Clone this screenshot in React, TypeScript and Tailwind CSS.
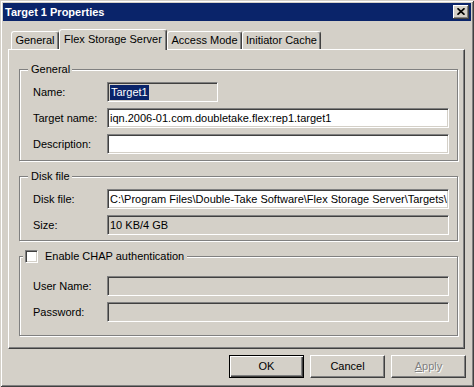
const field =
  'flex h-[20px] items-center overflow-hidden whitespace-nowrap border border-t-[#808080] border-l-[#808080] border-r-white border-b-white pl-[2px] shadow-[inset_1px_1px_0_#404040,inset_-1px_-1px_0_#d4d0c8]';

function Row({ label, children }: { label: string; children: React.ReactNode }) {
  return (
    <div className="flex h-[20px] items-center">
      <span className="w-[87px] pl-[13px]">{label}</span>
      {children}
    </div>
  );
}

function Group({
  title,
  titleClass = 'left-[8px] pl-[3px] pr-[2px]',
  className,
  children,
}: {
  title: React.ReactNode;
  titleClass?: string;
  className: string;
  children: React.ReactNode;
}) {
  return (
    <div
      className={`relative ml-[10px] w-[439px] border border-[#808080] shadow-[1px_1px_0_#fff,inset_1px_1px_0_#fff] ${className}`}
    >
      <div className={`absolute top-[-8px] flex h-[15px] items-center bg-[#d4d0c8] ${titleClass}`}>{title}</div>
      <div className="flex flex-col gap-[6px]">{children}</div>
    </div>
  );
}

function Tab({ label, active, width }: { label: string; active?: boolean; width: string }) {
  return active ? (
    <div
      className={`relative z-10 flex h-[21px] items-center justify-center self-start rounded-t-[3px] border-l border-t border-r border-white border-r-[#404040] bg-[#d4d0c8] pb-[2px] shadow-[inset_-1px_0_0_#808080] ${width}`}
    >
      {label}
    </div>
  ) : (
    <div
      className={`flex h-[18px] items-center justify-center rounded-t-[3px] border-l border-t border-r border-white border-r-[#404040] shadow-[inset_-1px_0_0_#808080] ${width}`}
    >
      {label}
    </div>
  );
}

function Button({ children, primary, disabled }: { children: React.ReactNode; primary?: boolean; disabled?: boolean }) {
  return (
    <div
      className={`flex h-[23px] w-[75px] items-center justify-center ${
        primary
          ? 'border border-black shadow-[inset_1px_1px_0_#fff,inset_-1px_-1px_0_#404040,inset_-2px_-2px_0_#808080]'
          : 'border border-t-white border-l-white border-r-[#404040] border-b-[#404040] shadow-[inset_-1px_-1px_0_#808080]'
      } ${disabled ? 'text-[#808080] [text-shadow:1px_1px_0_#fff]' : 'text-black'}`}
    >
      {children}
    </div>
  );
}

export default function App() {
  return (
    <div className="h-[387px] w-[474px] bg-[#d4d0c8] p-[3px] font-['Liberation_Sans',Arial,sans-serif] text-[11px] leading-[13px] text-black shadow-[inset_1px_1px_0_#d4d0c8,inset_-1px_-1px_0_#404040,inset_2px_2px_0_#fff,inset_-2px_-2px_0_#808080]">
      {/* title bar */}
      <div className="flex h-[18px] items-center justify-between bg-[#0a246a] pl-[2px] pr-[2px]">
        <span className="font-bold text-white">Target 1 Properties</span>
        <div className="flex h-[14px] w-[16px] items-center justify-center bg-[#d4d0c8] shadow-[inset_-1px_-1px_0_#404040,inset_1px_1px_0_#fff,inset_-2px_-2px_0_#808080]">
          <svg width="8" height="7" viewBox="0 0 8 7" className="mb-px">
            <path d="M0.5 0.3L7.5 6.7M7.5 0.3L0.5 6.7" stroke="#000" strokeWidth="1.7" />
          </svg>
        </div>
      </div>

      {/* tabs */}
      <div className="ml-[8px] mt-[8px] flex h-[20px] items-end">
        <Tab label="General" width="w-[48px]" />
        <Tab label="Flex Storage Server" width="w-[108px]" active />
        <Tab label="Access Mode" width="w-[75px]" />
        <Tab label="Initiator Cache" width="w-[79px]" />
      </div>

      {/* panel */}
      <div className="ml-[5px] h-[300px] w-[457px] border border-t-white border-l-white border-r-[#404040] border-b-[#404040] pt-[19px] shadow-[inset_-1px_-1px_0_#808080]">
        <Group title="General" className="h-[92px] pt-[12px]">
          <Row label="Name:">
            <div className={`${field} w-[111px] bg-[#d4d0c8]`}>
              <span className="bg-[#0a246a] px-px leading-[15px] text-white">Target1</span>
            </div>
          </Row>
          <Row label="Target name:">
            <div className={`${field} w-[342px] bg-white`}>iqn.2006-01.com.doubletake.flex:rep1.target1</div>
          </Row>
          <Row label="Description:">
            <div className={`${field} w-[342px] bg-white`} />
          </Row>
        </Group>

        <Group title="Disk file" className="mt-[15px] h-[65px] pt-[12px]">
          <Row label="Disk file:">
            <div className={`${field} w-[342px] bg-white`}>
              C:\Program Files\Double-Take Software\Flex Storage Server\Targets\
            </div>
          </Row>
          <Row label="Size:">
            <div className={`${field} w-[342px] bg-[#d4d0c8]`}>10 KB/4 GB</div>
          </Row>
        </Group>

        <Group
          className="mt-[15px] h-[80px] pt-[19px]"
          titleClass="left-[3px] pl-[2px] pr-[3px]"
          title={
            <span className="flex items-center gap-[7px]">
              <span className="h-[13px] w-[13px] border border-t-[#808080] border-l-[#808080] border-r-white border-b-white bg-white shadow-[inset_1px_1px_0_#404040,inset_-1px_-1px_0_#d4d0c8]" />
              <span>Enable CHAP authentication</span>
            </span>
          }
        >
          <Row label="User Name:">
            <div className={`${field} w-[342px] bg-[#d4d0c8]`} />
          </Row>
          <Row label="Password:">
            <div className={`${field} w-[342px] bg-[#d4d0c8]`} />
          </Row>
        </Group>
      </div>

      {/* buttons */}
      <div className="mt-[6px] flex justify-end gap-[6px] pr-[5px]">
        <Button primary>OK</Button>
        <Button>Cancel</Button>
        <Button disabled>
          <span>
            <span className="underline">A</span>pply
          </span>
        </Button>
      </div>
    </div>
  );
}
